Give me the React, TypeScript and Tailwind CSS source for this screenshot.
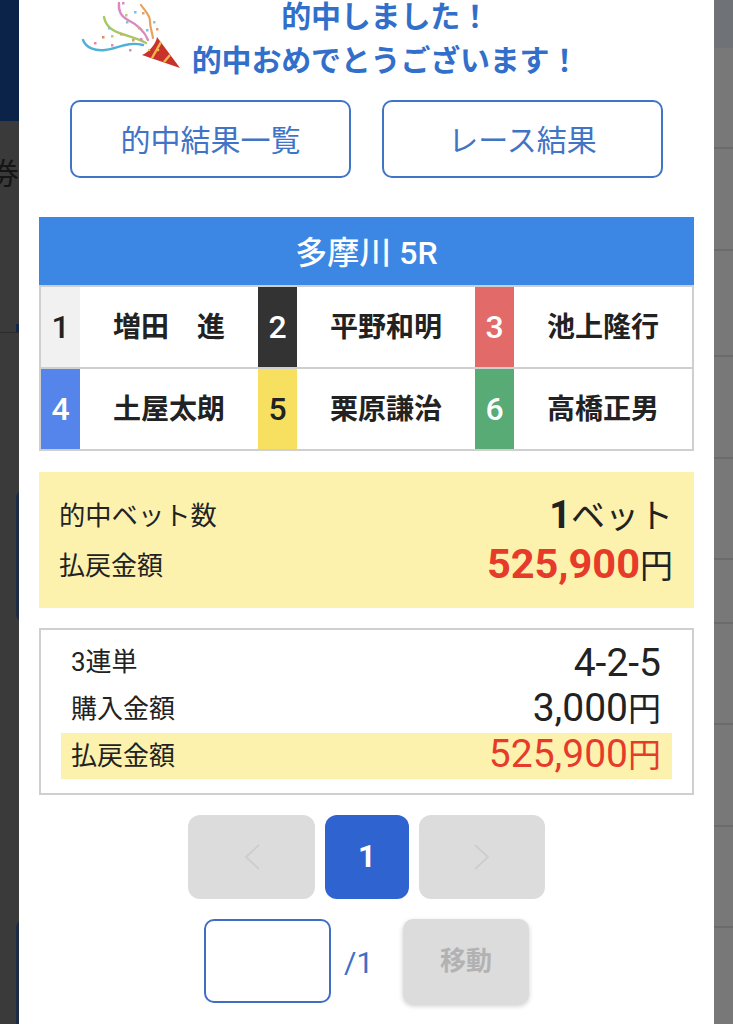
const racers = [
  { no: "1", name: "増田　進", color: "bg-[#f1f1f1] text-[#222]" },
  { no: "2", name: "平野和明", color: "bg-[#333333] text-white" },
  { no: "3", name: "池上隆行", color: "bg-[#e26a68] text-white" },
  { no: "4", name: "土屋太朗", color: "bg-[#5585ea] text-white" },
  { no: "5", name: "栗原謙治", color: "bg-[#f7e060] text-[#222]" },
  { no: "6", name: "高橋正男", color: "bg-[#58ab74] text-white" },
];

const rightRows = [48, 101, 102, 106, 102, 101, 64, 101, 102, 101];

const dots: [number, number, string][] = [
  [14, 42, "#e58aa0"], [22, 36, "#d98b6a"], [28, 27, "#7fc0dd"], [31, 35, "#b7cf6f"], [31, 44, "#d98bc0"],
  [45, 14, "#b7cf6f"], [40, 33, "#e0a070"], [52, 39, "#d9a05c"], [58, 27, "#e0a070"], [49, 49, "#d98bc0"],
  [54, 11, "#7fc0dd"], [46, 21, "#7fc0dd"], [66, 29, "#7fc0dd"], [62, 12, "#e0a070"], [73, 21, "#8fc4dd"],
  [76, 28, "#e0a070"], [42, 2, "#d98bc0"], [60, 38, "#d98bc0"],
];

const Confetti = () => (
  <svg width="104" height="74" viewBox="0 0 104 74" className="absolute left-[61px] top-0" fill="none">
    <path d="M3 40c3 8 12 11 22 10 12-1 22-9 38-5" stroke="#4fb0d8" strokeWidth="2.4" strokeLinecap="round" />
    <path d="M24 17c2 10 9 14 18 17 9 3 17 5 24 9" stroke="#a9c95f" strokeWidth="2.4" strokeLinecap="round" />
    <path d="M39 3c-1 9 3 14 9 17 8 4 16 10 20 20" stroke="#d98bc0" strokeWidth="2.4" strokeLinecap="round" />
    <path d="M61 5c4 6 9 10 9 16 0 6 2 11 3 17" stroke="#e8a25c" strokeWidth="2.2" strokeLinecap="round" />
    <path d="M77 37 L100 68 L62 55 C69 52 76 44 77 37Z" fill="#c8322b" />
    <path d="M81 42 L72 58 M90 55 L84 62" stroke="#efb64a" strokeWidth="2.4" />
    <circle cx="69" cy="50" r="1.3" fill="#f3c05a" />
    <circle cx="78" cy="50" r="1.3" fill="#f3c05a" />
    {dots.map(([x, y, c], i) => (
      <rect key={i} x={x} y={y} width="2.5" height="2.5" fill={c} />
    ))}
  </svg>
);

export default function App() {
  return (
    <div className="flex h-[1024px] w-[733px] overflow-hidden bg-[#3a3a3a] font-['Roboto','Noto_Sans_CJK_JP',sans-serif] text-[#222]">
      {/* dimmed page on the left */}
      <div className="flex w-[19px] shrink-0 flex-col overflow-hidden">
        <div className="h-[121px] shrink-0 bg-[#0b2349]" />
        <div className="mt-[38px] h-[30px] -ml-[11px] shrink-0 text-[30px] leading-[30px] text-[#151515]">券</div>
        <div className="mt-[135px] flex h-[8px] shrink-0 justify-end">
          <div className="w-[3px] bg-[#14264a]" />
        </div>
        <div className="h-px shrink-0 bg-[#2c2c2c]" />
        <div className="mt-[157px] ml-[16px] h-[132px] w-[8px] shrink-0 rounded-l-[8px] border-l-[3px] border-[#1c2a44]" />
        <div className="mt-[298px] ml-[16px] h-[110px] w-[8px] shrink-0 rounded-tl-[8px] border-l-[3px] border-[#1c2a44]" />
      </div>

      {/* modal */}
      <div className="relative flex w-[695px] shrink-0 flex-col items-center overflow-hidden bg-white">
        <Confetti />
        <div className="-mt-[5px] pl-[38px] text-center text-[30px] font-bold leading-[44px] tracking-[-0.2px] text-[#326fca]">
          <div>的中しました！</div>
          <div>的中おめでとうございます！</div>
        </div>

        <div className="mt-[17px] flex gap-[31px]">
          <button className="h-[78px] w-[281px] rounded-[10px] border-2 border-[#3f74c6] pt-[3px] text-[30px] text-[#3f74c6]">的中結果一覧</button>
          <button className="h-[78px] w-[281px] rounded-[10px] border-2 border-[#3f74c6] pt-[3px] text-[30px] text-[#3f74c6]">レース結果</button>
        </div>

        <div className="mt-[39px] flex h-[68px] w-[655px] items-center justify-center bg-[#3d87e4] pt-[3px] text-[32px] font-medium text-white">
          多摩川 5R
        </div>
        <div className="grid w-[655px] grid-cols-3 gap-y-[2px] border-2 border-[#cfcfcf] bg-[#cfcfcf]">
          {racers.map((r) => (
            <div key={r.no} className="flex h-[80px] bg-white">
              <div className={`flex w-[39px] shrink-0 items-center justify-center text-[32px] font-medium ${r.color}`}>{r.no}</div>
              <div className="flex flex-1 items-center justify-center pt-[2px] text-[28px] font-bold text-[#222]">{r.name}</div>
            </div>
          ))}
        </div>

        <div className="mt-[21px] flex h-[136px] w-[655px] flex-col justify-center bg-[#fdf1ae] pl-[20px] pr-[21px] text-[26px]">
          <div className="flex h-[50px] items-center justify-between">
            <span className="pt-[4px] text-[26.3px]">的中ベット数</span>
            <span className="text-[34px]"><b className="text-[38px]">1</b>ベット</span>
          </div>
          <div className="flex h-[50px] items-center justify-between">
            <span className="pt-[2px]">払戻金額</span>
            <span className="text-[33px]"><b className="text-[41.5px] leading-[50px] text-[#e63b2a]">525,900</b>円</span>
          </div>
        </div>

        <div className="mt-[20px] flex h-[167px] w-[655px] flex-col justify-center border-2 border-[#cfcfcf] px-[20px] pb-[4px] text-[26px]">
          <div className="flex h-[46px] items-center justify-between pl-[10px] pr-[11px]">
            <span className="pb-[2px]">3連単</span>
            <span className="text-[39px] leading-[46px]">4-2-5</span>
          </div>
          <div className="flex h-[47px] items-center justify-between pl-[10px] pr-[11px]">
            <span>購入金額</span>
            <span className="text-[33px]"><span className="text-[39px] leading-[46px]">3,000</span>円</span>
          </div>
          <div className="flex h-[46px] items-center justify-between bg-[#fdf1ae] pl-[10px] pr-[11px]">
            <span>払戻金額</span>
            <span className="text-[33px] text-[#e63b2a]"><span className="text-[39px] leading-[46px]">525,900</span>円</span>
          </div>
        </div>

        <div className="mt-[20px] flex gap-[10px]">
          <div className="flex h-[84px] w-[127px] items-center justify-center rounded-[12px] bg-[#dcdcdc]">
            <svg width="18" height="28" viewBox="0 0 18 28" fill="none"><path d="M16 2 L3 14 L16 26" stroke="#cdcdcd" strokeWidth="1.8" /></svg>
          </div>
          <div className="flex h-[84px] w-[84px] items-center justify-center rounded-[12px] bg-[#2f63d0] text-[31px] font-bold text-white">1</div>
          <div className="flex h-[84px] w-[126px] items-center justify-center rounded-[12px] bg-[#dcdcdc]">
            <svg width="18" height="28" viewBox="0 0 18 28" fill="none"><path d="M2 2 L15 14 L2 26" stroke="#cdcdcd" strokeWidth="1.8" /></svg>
          </div>
        </div>

        <div className="mt-[20px] flex items-start">
          <div className="h-[84px] w-[127px] rounded-[10px] border-2 border-[#3f6fc4] bg-white" />
          <div className="ml-[13px] mt-[21px] w-[59px] text-[30px] text-[#3f6fc4]">/1</div>
          <div className="flex h-[85px] w-[126px] items-center justify-center rounded-[10px] bg-[#dcdcdc] text-[26px] font-bold text-[#b2b2b2] shadow-[0_2px_5px_rgba(0,0,0,0.2)]">移動</div>
        </div>
      </div>

      {/* dimmed page on the right */}
      <div className="flex flex-1 flex-col bg-[#787878]">
        {rightRows.map((h, i) => (
          <div
            key={i}
            style={{ height: h }}
            className={i === 0 ? "shrink-0 bg-[#6f7378]" : "shrink-0 border-b-2 border-[#6b6b6b]"}
          />
        ))}
      </div>
    </div>
  );
}
